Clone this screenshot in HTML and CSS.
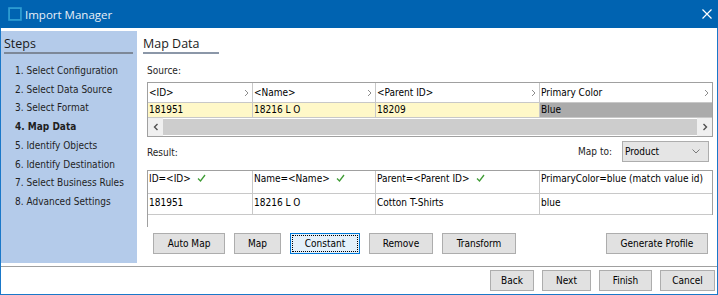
FILE: index.html
```html
<!DOCTYPE html>
<html lang="en">
<head>
    <meta charset="UTF-8">
    <title>Import Manager</title>
    <link rel="stylesheet" href="styles.css">
</head>
<body>

<div class="window">
    <div class="titlebar">
        <svg class="app-icon" viewBox="0 0 13 13"><rect x="1" y="1" width="11" height="11" fill="none" stroke="#2f9fd3" stroke-width="1.6"/></svg>
        <span class="title">Import Manager</span>
        <svg class="close" viewBox="0 0 10 10"><path d="M0.5 0.5 L9.5 9.5 M9.5 0.5 L0.5 9.5" stroke="#fff" stroke-width="1.2"/></svg>
    </div>

    <div class="body">
        <div class="steps">
            <h2 class="steps-title">Steps</h2>
            <ul class="step-list">
                <li>1. Select Configuration</li>
                <li>2. Select Data Source</li>
                <li>3. Select Format</li>
                <li class="current">4. Map Data</li>
                <li>5. Identify Objects</li>
                <li>6. Identify Destination</li>
                <li>7. Select Business Rules</li>
                <li>8. Advanced Settings</li>
            </ul>
        </div>

        <div class="content">
            <h1 class="page-title">Map Data</h1>

            <div class="source-label">Source:</div>
            <div class="source-grid">
                <div class="row head">
                    <div class="cell">&lt;ID&gt;<svg class="chev" viewBox="0 0 5 8"><path d="M1 1 L4 4 L1 7" fill="none" stroke="#8c8c8c"/></svg></div>
                    <div class="cell">&lt;Name&gt;<svg class="chev" viewBox="0 0 5 8"><path d="M1 1 L4 4 L1 7" fill="none" stroke="#8c8c8c"/></svg></div>
                    <div class="cell">&lt;Parent ID&gt;<svg class="chev" viewBox="0 0 5 8"><path d="M1 1 L4 4 L1 7" fill="none" stroke="#8c8c8c"/></svg></div>
                    <div class="cell">Primary Color<svg class="chev" viewBox="0 0 5 8"><path d="M1 1 L4 4 L1 7" fill="none" stroke="#8c8c8c"/></svg></div>
                </div>
                <div class="row data">
                    <div class="cell">181951</div>
                    <div class="cell">18216 L O</div>
                    <div class="cell">18209</div>
                    <div class="cell selected">Blue</div>
                </div>
                <div class="scrollbar">
                    <div class="scroll-btn"><svg viewBox="0 0 6 8"><path d="M4.5 1 L1.5 4 L4.5 7" fill="none" stroke="#505050" stroke-width="1.4"/></svg></div>
                    <div class="scroll-thumb"></div>
                    <div class="scroll-btn"><svg viewBox="0 0 6 8"><path d="M1.5 1 L4.5 4 L1.5 7" fill="none" stroke="#505050" stroke-width="1.4"/></svg></div>
                </div>
            </div>

            <div class="result-bar">
                <span class="result-label">Result:</span>
                <span class="map-to">Map to:</span>
                <div class="select">
                    <span>Product</span>
                    <svg viewBox="0 0 8 5"><path d="M0.5 0.5 L4 4 L7.5 0.5" fill="none" stroke="#7a7a7a"/></svg>
                </div>
            </div>

            <div class="result-grid">
                <div class="rows">
                    <div class="row head">
                        <div class="cell">ID=&lt;ID&gt;<svg class="check" viewBox="0 0 9 8"><path d="M1 4.5 L3.5 7 L8 1" fill="none" stroke="#3f9c35" stroke-width="1.3"/></svg></div>
                        <div class="cell">Name=&lt;Name&gt;<svg class="check" viewBox="0 0 9 8"><path d="M1 4.5 L3.5 7 L8 1" fill="none" stroke="#3f9c35" stroke-width="1.3"/></svg></div>
                        <div class="cell">Parent=&lt;Parent ID&gt;<svg class="check" viewBox="0 0 9 8"><path d="M1 4.5 L3.5 7 L8 1" fill="none" stroke="#3f9c35" stroke-width="1.3"/></svg></div>
                        <div class="cell">PrimaryColor=blue (match value id)</div>
                    </div>
                    <div class="row data">
                        <div class="cell">181951</div>
                        <div class="cell">18216 L O</div>
                        <div class="cell">Cotton T-Shirts</div>
                        <div class="cell">blue</div>
                    </div>
                </div>
            </div>

            <div class="actions">
                <button class="btn w-automap">Auto Map</button>
                <button class="btn w-map">Map</button>
                <button class="btn w-constant focused">Constant</button>
                <button class="btn w-remove">Remove</button>
                <button class="btn w-transform">Transform</button>
                <button class="btn w-profile">Generate Profile</button>
            </div>
        </div>
    </div>

    <div class="footer">
        <button class="btn w-back">Back</button>
        <button class="btn w-next">Next</button>
        <button class="btn w-finish">Finish</button>
        <button class="btn w-cancel">Cancel</button>
    </div>
</div>

</body>
</html>
```

FILE: styles.css
```css
* {
    box-sizing: border-box;
}
body {
    margin: 0;
    font-family: "DejaVu Sans Condensed", "DejaVu Sans", sans-serif;
    font-size: 10px;
    color: #000;
    background-color: #fff;
}
.window {
    width: 718px;
    height: 295px;
    border: 1px solid #1a78c9;
    border-top: 0;
    display: flex;
    flex-direction: column;
}

/* title bar */
.titlebar {
    height: 28px;
    margin: 0 -1px;
    padding: 0 6px 0 8px;
    background-color: #0063b1;
    display: flex;
    align-items: center;
    color: #fff;
}
.app-icon {
    width: 14px;
    height: 14px;
    margin-right: 3px;
}
.title {
    flex: 1;
    font-family: "Open Sans", sans-serif;
    font-size: 11.5px;
    color: #e8f0f8;
}
.close {
    width: 10px;
    height: 10px;
}

/* body */
.body {
    height: 238px;
    padding: 3px 0;
    display: flex;
}
.steps {
    width: 136px;
    padding: 0 3px;
    background-color: #b4cbea;
}
.steps-title,
.page-title {
    margin: 0;
    padding-top: 5px;
    font-family: "Open Sans", sans-serif;
    font-size: 12.5px;
    font-weight: normal;
    line-height: 16px;
    color: #1b1b1b;
    border-bottom: 2px solid #7d8898;
}
.steps-title {
    width: 129px;
}
.step-list {
    list-style: none;
    margin: 8px 0 0;
    padding-left: 11px;
}
.step-list li {
    line-height: 18.7px;
    white-space: nowrap;
    color: #1f1f1f;
}
.step-list li.current {
    font-weight: bold;
}

.content {
    flex: 1;
    padding: 0 4px 0 10px;
    display: flex;
    flex-direction: column;
}
.page-title {
    align-self: flex-start;
    width: 76px;
    margin-left: -4px;
    border-bottom-color: #8b97a8;
}
.source-label {
    margin-top: 10px;
    line-height: 14px;
    color: #1e1e1e;
}

/* grids */
.row {
    display: grid;
    grid-template-columns: 105px 123px 164px 1fr;
}
.cell {
    padding-left: 1px;
    white-space: nowrap;
    overflow: hidden;
    border-right: 1px solid #c8c8c8;
}
.cell:last-child {
    border-right: 0;
}
.source-grid {
    margin-top: 4px;
    border: 1px solid #a0a0a0;
}
.source-grid .head .cell {
    height: 20px;
    padding-right: 3px;
    line-height: 19px;
    border-bottom: 1px solid #c8c8c8;
    display: flex;
    justify-content: space-between;
    align-items: center;
}
.chev {
    width: 5px;
    height: 8px;
}
.source-grid .data .cell {
    height: 15px;
    line-height: 14px;
    background-color: #fff8c8;
    border-bottom: 1px solid #c8c8c8;
}
.source-grid .data .cell.selected {
    background-color: #ababab;
}
.scrollbar {
    height: 18px;
    display: flex;
}
.scroll-btn {
    width: 15px;
    background-color: #f0f0f0;
    display: flex;
    align-items: center;
    justify-content: center;
}
.scroll-btn svg {
    width: 6px;
    height: 8px;
}
.scroll-thumb {
    flex: 1;
    margin: 1px 0;
    background-color: #cdcdcd;
}

.result-bar {
    margin-top: 4px;
    height: 21px;
    display: flex;
}
.result-label {
    flex: 1;
    padding-top: 5px;
    line-height: 14px;
    color: #1e1e1e;
}
.map-to {
    margin-right: 10px;
    line-height: 21px;
    color: #1e1e1e;
}
.select {
    width: 87px;
    height: 21px;
    margin-right: 4px;
    padding: 0 8px 0 2px;
    background-color: #e5e5e5;
    border: 1px solid #adadad;
    display: flex;
    align-items: center;
    justify-content: space-between;
}
.select svg {
    width: 8px;
    height: 5px;
}

.result-grid {
    margin-top: 8px;
    height: 57px;
    border-left: 1px solid #a0a0a0;
}
.result-grid .rows {
    border-top: 1px solid #a0a0a0;
    border-right: 1px solid #a0a0a0;
}
.result-grid .cell {
    border-bottom: 1px solid #c8c8c8;
    padding-top: 1px;
    line-height: 14px;
}
.result-grid .head .cell {
    height: 23px;
}
.result-grid .data .cell {
    height: 21px;
    padding-top: 2px;
}
.check {
    width: 9px;
    height: 8px;
    margin-left: 6px;
}

/* buttons */
.btn {
    height: 21px;
    padding: 0;
    font-family: inherit;
    font-size: 10px;
    color: #000;
    background-color: #e1e1e1;
    border: 1px solid #adadad;
}
.btn.focused {
    background-color: #e5f1fb;
    border-color: #0078d7;
    outline: 1px dotted #000;
    outline-offset: -3px;
}
.actions {
    margin-top: 6px;
    padding-left: 6px;
    display: flex;
    gap: 9px;
}
.w-automap { width: 72px; }
.w-map { width: 47px; }
.w-constant { width: 70px; }
.w-remove { width: 64px; }
.w-transform { width: 74px; }
.w-profile { width: 102px; margin-left: auto; margin-right: 5px; }

.footer {
    height: 28px;
    padding: 3px 2px 0 0;
    border-top: 1px solid #a0a0a0;
    display: flex;
    justify-content: flex-end;
    gap: 8px;
}
.w-back { width: 44px; }
.w-next { width: 49px; }
.w-finish { width: 53px; }
.w-cancel { width: 55px; }
```
